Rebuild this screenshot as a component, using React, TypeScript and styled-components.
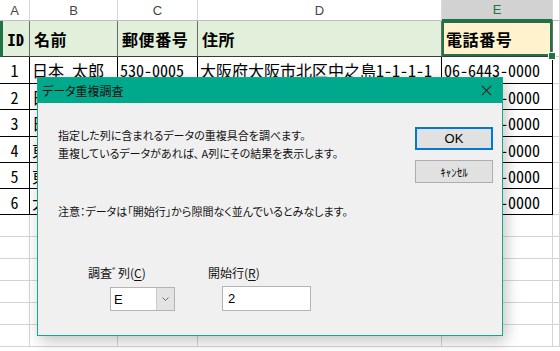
import styled, { createGlobalStyle } from 'styled-components';

const GlobalStyle = createGlobalStyle`
  html, body {
    margin: 0;
    padding: 0;
    background: #ffffff;
    overflow: hidden;
  }
  body {
    font-family: "Noto Sans CJK JP", "Noto Sans", sans-serif;
  }
`;

const letters = ['A', 'B', 'C', 'D', 'E', ''];

const header = ['ID', '名前', '郵便番号', '住所', '電話番号'];

const rows = [
  ['1', '日本　太郎', '530-0005', '大阪府大阪市北区中之島1-1-1-1', '06-6443-0000'],
  ['2', '日本　花子', '530-0001', '大阪府大阪市北区梅田2-2-2', '06-6443-0000'],
  ['3', '日本　次郎', '530-0005', '大阪府大阪市北区中之島3-3-3', '06-6443-0000'],
  ['4', '東京　一郎', '100-0005', '東京都千代田区丸の内1-1-1', '03-6443-0000'],
  ['5', '東京　花子', '100-0005', '東京都千代田区丸の内2-2-2', '03-6443-0000'],
  ['6', '大阪　三郎', '530-0005', '大阪府大阪市北区中之島1-1-1-1', '06-6443-0000'],
];

const emptyRows = 6;

export default function App() {
  return (
    <>
      <GlobalStyle />
      <Sheet>
        {letters.map((l, i) => (
          <ColHead key={'h' + i} $active={l === 'E'}>
            {l}
          </ColHead>
        ))}

        {header.map((h, i) => (
          <HeadCell key={'t' + i} $selected={i === 4} $first={i === 0}>
            {h}
            {i === 4 && <FillHandle />}
          </HeadCell>
        ))}
        <EmptyCell />

        {rows.map((r, ri) =>
          [
            ...r.map((v, ci) => (
              <DataCell key={`d${ri}-${ci}`} $center={ci === 0}>
                {v}
              </DataCell>
            )),
            <EmptyCell key={`d${ri}-f`} />,
          ]
        )}

        {Array.from({ length: emptyRows * 6 }).map((_, i) => (
          <EmptyCell key={'e' + i} />
        ))}

        <Dialog>
          <TitleBar>
            <TitleText>データ重複調査</TitleText>
            <CloseIcon viewBox="0 0 12 12">
              <path d="M1 1 L11 11 M11 1 L1 11" stroke="#222" strokeWidth="1.1" fill="none" />
            </CloseIcon>
          </TitleBar>
          <DialogBody>
            <Messages>
              <Message>
                指定した列に含まれるデータの重複具合を調べます。
                <br />
                重複しているデータがあれば、 A列にその結果を表示します。
              </Message>
              <Note>注意：データは「開始行」から隙間なく並んでいるとみなします。</Note>
              <FieldRow>
                <Field $width={120}>
                  <Label>
                    調査ﾞ列(<u>C</u>)
                  </Label>
                  <Combo $indent={22}>
                    <ComboValue>E</ComboValue>
                    <ComboButton>
                      <svg width="9" height="6" viewBox="0 0 9 6">
                        <path d="M1.5 1.5 L4.5 4.5 L7.5 1.5" stroke="#6d6d6d" strokeWidth="1" fill="none" />
                      </svg>
                    </ComboButton>
                  </Combo>
                </Field>
                <Field $width={110}>
                  <Label>
                    開始行(<u>R</u>)
                  </Label>
                  <TextBox $indent={14}>2</TextBox>
                </Field>
              </FieldRow>
            </Messages>
            <Buttons>
              <Button $default>OK</Button>
              <Button>ｷｬﾝｾﾙ</Button>
            </Buttons>
          </DialogBody>
        </Dialog>
      </Sheet>
    </>
  );
}

const Sheet = styled.div`
  position: relative;
  width: 560px;
  height: 351px;
  overflow: hidden;
  display: grid;
  grid-template-columns: 30px 88px 80px 244px 111px 1fr;
  grid-template-rows: 21px 36px 27px 26px 27px 26px 26px 26px repeat(6, 22px);
  background: #ffffff;
`;

const ColHead = styled.div<{ $active?: boolean }>`
  display: flex;
  align-items: center;
  justify-content: center;
  font-family: "Liberation Sans", Arial, sans-serif;
  font-size: 13px;
  color: ${(p) => (p.$active ? '#217346' : '#444444')};
  background: ${(p) => (p.$active ? '#d2d2d2' : '#ffffff')};
  border-right: 1px solid #d8d8d8;
  border-bottom: ${(p) => (p.$active ? '2px solid #217346' : '1px solid #bdbdbd')};
  box-sizing: border-box;
`;

const HeadCell = styled.div<{ $selected?: boolean; $first?: boolean }>`
  position: relative;
  display: flex;
  align-items: center;
  padding-left: ${(p) => (p.$first ? '0' : '4px')};
  justify-content: ${(p) => (p.$first ? 'center' : 'flex-start')};
  font-size: 16px;
  font-weight: 700;
  letter-spacing: 0.6px;
  font-feature-settings: "hwid";
  color: #000000;
  background: ${(p) => (p.$selected ? '#fff2cc' : '#e2efda')};
  border-right: 1px solid #6b6b6b;
  border-bottom: 1px solid #3a3a3a;
  border-left: ${(p) => (p.$first ? '3px solid #217346' : 'none')};
  box-shadow: ${(p) => (p.$selected ? 'inset 0 0 0 2px #217346' : 'none')};
  box-sizing: border-box;
`;

const FillHandle = styled.span`
  position: absolute;
  right: -4px;
  bottom: -4px;
  width: 6px;
  height: 6px;
  background: #217346;
  border: 1px solid #ffffff;
  z-index: 1;
`;

const DataCell = styled.div<{ $center?: boolean }>`
  display: flex;
  align-items: center;
  justify-content: ${(p) => (p.$center ? 'center' : 'flex-start')};
  padding-left: ${(p) => (p.$center ? '0' : '2px')};
  font-size: 16px;
  font-feature-settings: "hwid";
  white-space: nowrap;
  overflow: hidden;
  color: #000000;
  border-right: 1px solid #000000;
  border-bottom: 1px solid #000000;
  box-sizing: border-box;
`;

const EmptyCell = styled.div`
  border-right: 1px solid #d4d4d4;
  border-bottom: 1px solid #d4d4d4;
  box-sizing: border-box;
`;

const Dialog = styled.div`
  position: absolute;
  left: 37px;
  top: 77px;
  width: 466px;
  height: 259px;
  box-sizing: border-box;
  border: 1px solid #1aa68b;
  background: #f0f0f0;
  display: flex;
  flex-direction: column;
  box-shadow: 3px 5px 14px rgba(0, 0, 0, 0.24);
`;

const TitleBar = styled.div`
  height: 25px;
  background: #00a98c;
  display: flex;
  align-items: center;
  justify-content: space-between;
  padding: 0 10px 0 4px;
`;

const TitleText = styled.span`
  font-size: 12px;
  font-feature-settings: "palt";
  color: #111111;
`;

const CloseIcon = styled.svg`
  width: 11px;
  height: 11px;
`;

const DialogBody = styled.div`
  flex: 1;
  display: flex;
  justify-content: space-between;
  padding: 23px 9px 0 20px;
`;

const Messages = styled.div`
  display: flex;
  flex-direction: column;
`;

const Message = styled.p`
  margin: 0;
  font-size: 11px;
  line-height: 18px;
  font-feature-settings: "palt";
  color: #111111;
`;

const Note = styled(Message)`
  margin-top: 40px;
`;

const FieldRow = styled.div`
  display: flex;
  margin-top: 44px;
  padding-left: 30px;
`;

const Field = styled.div<{ $width: number }>`
  width: ${(p) => p.$width}px;
  display: flex;
  flex-direction: column;
  align-items: flex-start;
`;

const Label = styled.span`
  font-size: 12px;
  line-height: 18px;
  font-feature-settings: "palt";
  color: #111111;

  u {
    text-underline-offset: 2px;
  }
`;

const Combo = styled.div<{ $indent: number }>`
  margin-left: ${(p) => p.$indent}px;
  margin-top: 5px;
  width: 65px;
  height: 24px;
  box-sizing: border-box;
  border: 1px solid #b4b4b4;
  background: #ffffff;
  display: flex;
`;

const ComboValue = styled.span`
  flex: 1;
  display: flex;
  align-items: center;
  padding-left: 3px;
  font-family: "Liberation Sans", Arial, sans-serif;
  font-size: 13px;
  color: #000000;
`;

const ComboButton = styled.span`
  width: 17px;
  display: flex;
  align-items: center;
  justify-content: center;
  background: #e3e3e3;
  border-left: 1px solid #cccccc;
`;

const TextBox = styled.div<{ $indent: number }>`
  margin-left: ${(p) => p.$indent}px;
  margin-top: 4px;
  width: 89px;
  height: 25px;
  box-sizing: border-box;
  border: 1px solid #b4b4b4;
  background: #ffffff;
  display: flex;
  align-items: center;
  padding-left: 5px;
  font-family: "Liberation Sans", Arial, sans-serif;
  font-size: 13px;
  color: #000000;
`;

const Buttons = styled.div`
  display: flex;
  flex-direction: column;
  gap: 10px;
  padding-top: 1px;
`;

const Button = styled.div<{ $default?: boolean }>`
  width: 78px;
  height: 23px;
  box-sizing: border-box;
  display: flex;
  align-items: center;
  justify-content: center;
  background: #e1e1e1;
  border: ${(p) => (p.$default ? '2px solid #0078d7' : '1px solid #adadad')};
  font-family: "Liberation Sans", "Noto Sans CJK JP", sans-serif;
  font-size: ${(p) => (p.$default ? '13px' : '11px')};
  color: #000000;
`;
